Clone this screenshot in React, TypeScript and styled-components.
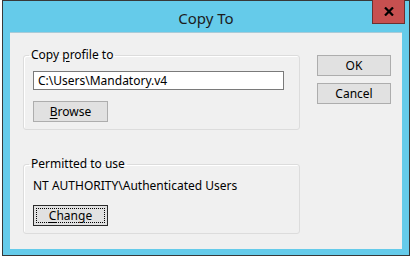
import React from 'react'
import styled, { createGlobalStyle } from 'styled-components'

const GlobalStyle = createGlobalStyle`
  html, body {
    margin: 0;
    padding: 0;
    background: #ffffff;
  }
  body {
    font-family: 'Noto Sans', 'Liberation Sans', sans-serif;
    font-size: 12px;
    color: #000000;
  }
`

const Page = styled.div`
  padding-left: 2px;
`

const Window = styled.div`
  width: 408px;
  height: 256px;
  box-sizing: border-box;
  border: 1px solid #383838;
  background: #65cbea;
  display: flex;
  flex-direction: column;
`

const TitleBar = styled.div`
  height: 31px;
  display: grid;
  grid-template-columns: 1fr auto 1fr;
`

const Title = styled.div`
  grid-column: 2;
  align-self: center;
  font-size: 15px;
  color: #1c1c1c;
  padding-top: 2px;
`

const CloseButton = styled.div`
  grid-column: 3;
  justify-self: end;
  align-self: start;
  margin-top: -1px;
  margin-right: 4px;
  width: 33px;
  height: 24px;
  box-sizing: border-box;
  background: #c75050;
  border: 1px solid #6b3030;
  border-top: none;
  display: flex;
  align-items: center;
  justify-content: center;
`

const Client = styled.div`
  flex: 1;
  margin: 0 7px 6px;
  background: #f0f0f0;
  border-top: 1px solid #a9cbd8;
  display: grid;
  grid-template-columns: 277px 74px;
  column-gap: 17px;
  padding: 14px 0 0 13px;
  box-sizing: border-box;
`

const Groups = styled.div`
  display: flex;
  flex-direction: column;
  gap: 26px;
`

const Group = styled.fieldset<{ top: number }>`
  margin: 0;
  border: 1px solid #dcdcdc;
  border-radius: 3px;
  box-shadow: inset 1px 1px 0 #ffffff;
  padding: ${(p) => p.top}px 15px 7px 9px;
  display: flex;
  flex-direction: column;
  align-items: flex-start;
`

const Legend = styled.legend`
  margin-left: -4px;
  padding: 0 2px;
  line-height: 16px;
`

const Key = styled.span`
  text-decoration: underline;
  text-underline-offset: 2px;
`

const TextInput = styled.div`
  width: 251px;
  height: 19px;
  box-sizing: border-box;
  border: 1px solid #7a7a7a;
  background: #ffffff;
  padding: 0 4px;
  line-height: 17px;
  margin-bottom: 11px;
`

const Note = styled.div`
  line-height: 16px;
  margin: 0 0 11px;
`

const Button = styled.div<{ focused?: boolean; wide?: boolean }>`
  width: ${(p) => (p.wide ? '75px' : '74px')};
  height: 21px;
  box-sizing: border-box;
  background: #e1e1e1;
  border: 1px solid ${(p) => (p.focused ? '#2b2b2b' : '#adadad')};
  display: flex;
  align-items: center;
  justify-content: center;
  line-height: 16px;
  position: relative;
  ${(p) =>
    p.focused &&
    `
    &::after {
      content: '';
      position: absolute;
      inset: 2px;
      border: 1px dotted #000000;
    }
  `}
`

const SideButtons = styled.div`
  display: flex;
  flex-direction: column;
  gap: 7px;
  padding-top: 8px;
`

export default function App() {
  return (
    <Page>
      <GlobalStyle />
      <Window>
        <TitleBar>
          <Title>Copy To</Title>
          <CloseButton>
            <svg width="10" height="9" viewBox="0 0 10 9">
              <path d="M1 0.5 L9 8.5 M9 0.5 L1 8.5" stroke="#000" strokeWidth="2.2" />
            </svg>
          </CloseButton>
        </TitleBar>
        <Client>
          <Groups>
            <Group top={8}>
              <Legend>
                Copy <Key>p</Key>rofile to
              </Legend>
              <TextInput>C:\Users\Mandatory.v4</TextInput>
              <Button wide>
                <span>
                  <Key>B</Key>rowse
                </span>
              </Button>
            </Group>
            <Group top={6}>
              <Legend>Permitted to use</Legend>
              <Note>NT AUTHORITY\Authenticated Users</Note>
              <Button wide focused>
                <span>
                  <Key>C</Key>hange
                </span>
              </Button>
            </Group>
          </Groups>
          <SideButtons>
            <Button>OK</Button>
            <Button>Cancel</Button>
          </SideButtons>
        </Client>
      </Window>
    </Page>
  )
}
